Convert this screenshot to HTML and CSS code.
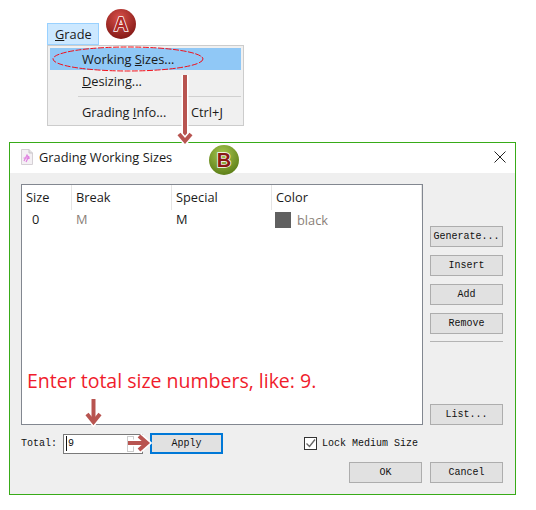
FILE: index.html
```html
<!DOCTYPE html>
<html lang="en">
<head>
    <meta charset="UTF-8">
    <meta name="viewport" content="width=device-width, initial-scale=1.0">
    <title>Grading Working Sizes</title>
    <link rel="stylesheet" href="styles.css">
</head>
<body>
    <div class="menu-area">
        <div class="menu-title"><u>G</u>rade</div>
        <div class="menu">
            <div class="menu-item active">Working <u>S</u>izes...</div>
            <div class="menu-item"><u>D</u>esizing...</div>
            <div class="menu-sep"></div>
            <div class="menu-item last"><span class="menu-label">Grading <u>I</u>nfo...</span><span>Ctrl+J</span></div>
        </div>
    </div>

    <div class="dialog">
        <div class="titlebar">
            <svg class="title-icon" width="14" height="16" viewBox="0 0 14 16">
                <path d="M1.5 .5H9L12.5 4V15.5H1.5Z" fill="#f4f0f4" stroke="#d5d0d5"/>
                <path d="M9 .5V4H12.5" fill="#e4e0e4" stroke="#c8c4c8"/>
                <path d="M4 12L7 6L9 10M3.5 9H10M6 13L9 7" fill="none" stroke="#e080e0" stroke-width="1.2"/>
            </svg>
            <span class="title-text">Grading Working Sizes</span>
            <svg class="close-icon" width="12" height="12" viewBox="0 0 12 12">
                <path d="M.5 .5L11.5 11.5M11.5 .5L.5 11.5" stroke="#222" fill="none"/>
            </svg>
        </div>
        <div class="dialog-body">
            <div class="top-row">
                <div class="list">
                    <div class="list-row list-head">
                        <div class="col">Size</div>
                        <div class="col">Break</div>
                        <div class="col">Special</div>
                        <div class="col">Color</div>
                    </div>
                    <div class="list-row">
                        <div class="col cell-num">0</div>
                        <div class="col cell-gray">M</div>
                        <div class="col">M</div>
                        <div class="col cell-color"><span class="swatch"></span><span class="cell-gray">black</span></div>
                    </div>
                    <div class="hint">Enter total size numbers, like: 9.</div>
                </div>
                <div class="side">
                    <button class="btn">Generate...</button>
                    <button class="btn">Insert</button>
                    <button class="btn">Add</button>
                    <button class="btn">Remove</button>
                    <div class="side-sep"></div>
                    <button class="btn btn-list">List...</button>
                </div>
            </div>
            <div class="total-row">
                <span class="mono total-label">Total:</span>
                <div class="total-input">
                    <span class="caret"></span><span class="mono">9</span>
                    <span class="spin"></span>
                </div>
                <button class="btn btn-apply">Apply</button>
                <label class="lock mono">
                    <span class="check">
                        <svg width="11" height="11" viewBox="0 0 11 11"><path d="M1.5 5.5L4.5 8.5L10 1.5" fill="none" stroke="#666" stroke-width="1.4"/></svg>
                    </span>
                    Lock Medium Size
                </label>
            </div>
            <div class="action-row">
                <button class="btn">OK</button>
                <button class="btn">Cancel</button>
            </div>
        </div>
    </div>

    <!-- callouts drawn over the screenshot -->
    <svg class="callouts" width="536" height="510" viewBox="0 0 536 510">
        <defs>
            <radialGradient id="badge-a" cx="45%" cy="30%" r="75%">
                <stop offset="0" stop-color="#d8504a"/>
                <stop offset="1" stop-color="#7e1512"/>
            </radialGradient>
            <radialGradient id="badge-b" cx="45%" cy="30%" r="75%">
                <stop offset="0" stop-color="#a8c850"/>
                <stop offset="1" stop-color="#587a14"/>
            </radialGradient>
        </defs>
        <ellipse cx="128" cy="59" rx="75" ry="12" fill="none" stroke="#f0101c" stroke-dasharray="6 1.5"/>

        <path d="M185 75V136" stroke="#fff" stroke-width="7" fill="none"/>
        <path d="M185 75V137" stroke="#b85450" stroke-width="4" fill="none"/>
        <path d="M179 134L185 141L191 134" stroke="#fff" stroke-width="7" fill="none"/>
        <path d="M179 134L185 141L191 134" stroke="#b85450" stroke-width="4" fill="none"/>

        <path d="M93.500 399V421" stroke="#fff" stroke-width="7" fill="none"/>
        <path d="M87 414L93.500 422L100 414" stroke="#fff" stroke-width="7" fill="none"/>
        <path d="M93.500 399V421" stroke="#b85450" stroke-width="4" fill="none"/>
        <path d="M87 414L93.500 422L100 414" stroke="#b85450" stroke-width="4" fill="none"/>

        <path d="M128 443H146" stroke="#fff" stroke-width="7" fill="none"/>
        <path d="M139 436L147 443L139 450" stroke="#fff" stroke-width="7" fill="none"/>
        <path d="M128 443H146" stroke="#b85450" stroke-width="4" fill="none"/>
        <path d="M139 436L147 443L139 450" stroke="#b85450" stroke-width="4" fill="none"/>

        <circle cx="121" cy="24" r="15" fill="url(#badge-a)"/>
        <text class="badge-text" x="121" y="31" text-anchor="middle">A</text>
        <circle cx="224" cy="160" r="15" fill="url(#badge-b)"/>
        <text class="badge-text badge-b" x="224" y="167" text-anchor="middle">B</text>
    </svg>
</body>
</html>
```

FILE: styles.css
```css
* {
    margin: 0;
    padding: 0;
    box-sizing: border-box;
}

body {
    position: relative;
    width: 536px;
    height: 510px;
    overflow: hidden;
    background-color: #fff;
    color: #1a1a1a;
    font-family: 'Open Sans', sans-serif;
    font-size: 12.8px;
}

.mono {
    font-family: 'Liberation Mono', monospace;
    font-size: 10px;
    color: #111;
}

/* Menu */
.menu-area {
    margin-left: 47px;
    padding-top: 23px;
}

.menu-title {
    width: 52px;
    height: 22px;
    line-height: 20px;
    padding-left: 7px;
    background-color: #cce8ff;
    border: 1px solid #99d1ff;
}

.menu {
    width: 197px;
    height: 81px;
    padding: 2px;
    background-color: #f0f0f0;
    border: 1px solid #ccc;
}

.menu-item {
    height: 22px;
    line-height: 20px;
    padding-left: 32px;
}

.menu-item.active {
    line-height: 22px;
    background-color: #90c8f6;
}

.menu-item + .menu-item {
    margin-top: 1px;
}

.menu-sep {
    height: 1px;
    margin: 3px 0 5px 28px;
    background-color: #d0d0d0;
}

.menu-item.last {
    display: flex;
    margin-top: 0;
}

.menu-label {
    width: 109px;
}

/* Dialog */
.dialog {
    width: 507px;
    height: 353px;
    margin: 16px 0 0 9px;
    background-color: #efefef;
    border: 1px solid #38ab18;
}

.titlebar {
    display: flex;
    align-items: center;
    height: 30px;
    padding: 0 9px 2px 10px;
    background-color: #fff;
}

.title-text {
    margin-left: 5px;
    flex: 1;
}

.dialog-body {
    padding: 11px 12px 0 11px;
}

.top-row {
    display: flex;
    gap: 7px;
}

.list {
    position: relative;
    width: 402px;
    height: 241px;
    background-color: #fff;
    border: 1px solid #828790;
}

.list-row {
    display: grid;
    grid-template-columns: 50px 100px 100px 150px;
    height: 20px;
    line-height: 18px;
}

.list-head {
    height: 25px;
    line-height: 24px;
}

.list-head .col {
    border-right: 1px solid #e5e5e5;
}

.col {
    padding-left: 4px;
}

.cell-num {
    padding-left: 10px;
}

.cell-gray {
    color: #8a8078;
}

.cell-color {
    display: flex;
    align-items: center;
    gap: 6px;
    padding-left: 3px;
}

.swatch {
    width: 16px;
    height: 16px;
    background-color: #606060;
}

.hint {
    position: absolute;
    left: 5px;
    top: 182px;
    color: #f01c2c;
    font-size: 19.5px;
    white-space: nowrap;
}

.side {
    display: flex;
    flex-direction: column;
    width: 73px;
    padding-top: 42px;
    gap: 8px;
}

.side-sep {
    height: 1px;
    margin-top: -1px;
    background-color: #b4b4b4;
}

.btn {
    width: 73px;
    height: 21px;
    flex: none;
    background-color: #e1e1e1;
    border: 1px solid #adadad;
    font-family: 'Liberation Mono', monospace;
    font-size: 10px;
    color: #111;
}

.btn-list {
    margin-top: 54px;
}

/* Bottom rows */
.total-row {
    display: flex;
    align-items: center;
    height: 21px;
    margin-top: 8px;
}

.total-label {
    width: 42px;
}

.total-input {
    position: relative;
    display: flex;
    align-items: center;
    width: 80px;
    height: 20px;
    padding-left: 2px;
    background-color: #fff;
    border: 1px solid #7a7a7a;
}

.caret {
    width: 1px;
    height: 15px;
    margin-right: 1px;
    background-color: #111;
}

.spin {
    position: absolute;
    right: 8px;
    top: 1px;
    width: 7px;
    height: 16px;
    border: 1px solid #ccc;
}

.btn-apply {
    margin-left: 7px;
    border: 2px solid #0078d7;
}

.lock {
    display: flex;
    align-items: center;
    gap: 5px;
    margin-left: 81px;
}

.check {
    display: flex;
    align-items: center;
    justify-content: center;
    width: 13px;
    height: 13px;
    background-color: #fff;
    border: 1px solid #333;
}

.action-row {
    display: flex;
    justify-content: flex-end;
    gap: 8px;
    margin-top: 8px;
}

/* Callouts */
.callouts {
    position: absolute;
    left: 0;
    top: 0;
}

.badge-text {
    font-family: 'Liberation Sans', sans-serif;
    font-size: 20px;
    font-weight: 700;
    fill: #b02a26;
    stroke: #fff;
    stroke-width: 1.5;
    paint-order: stroke;
}

.badge-b {
    fill: #8a1a14;
}
```
